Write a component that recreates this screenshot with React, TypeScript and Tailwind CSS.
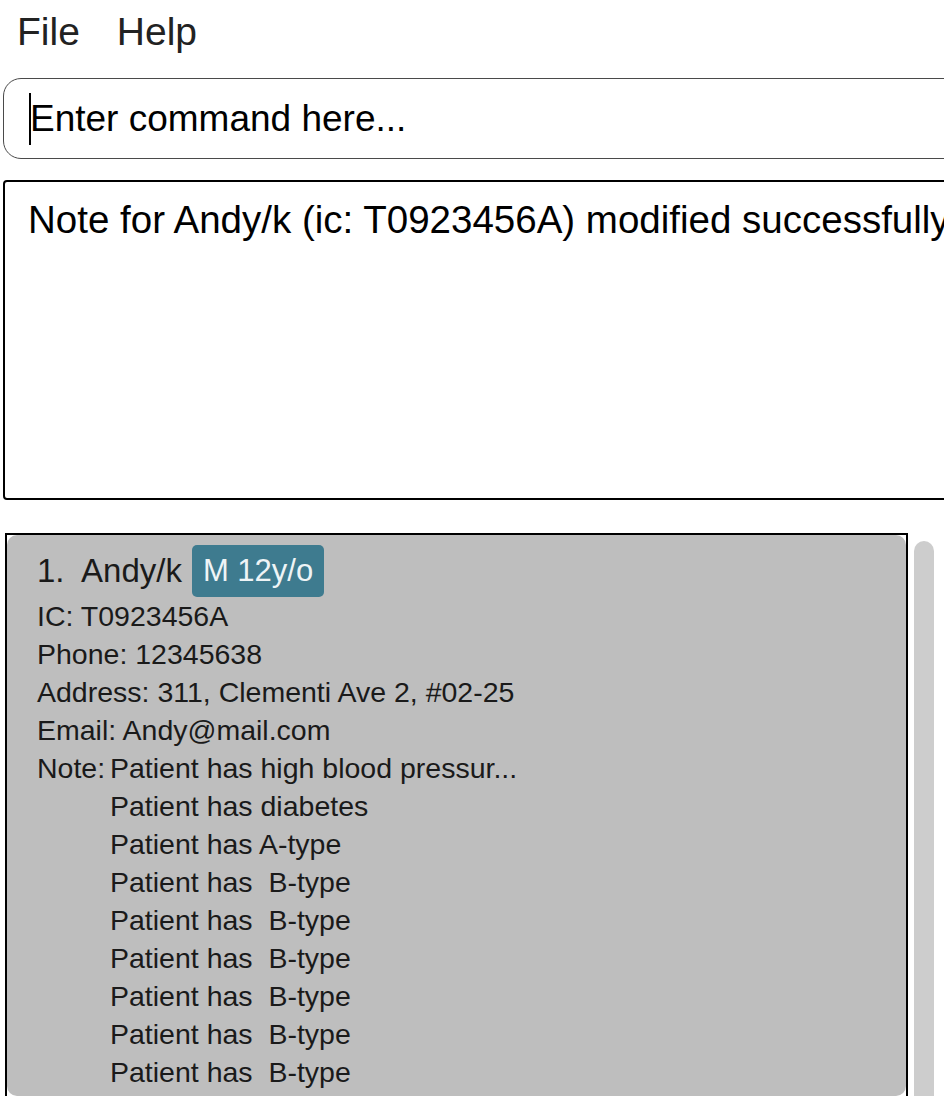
const noteLines = [
  "Patient has high blood pressur...",
  "Patient has diabetes",
  "Patient has A-type",
  "Patient has  B-type",
  "Patient has  B-type",
  "Patient has  B-type",
  "Patient has  B-type",
  "Patient has  B-type",
  "Patient has  B-type",
];

const App = () => {
  return (
    <div className="relative h-[1096px] w-[944px] overflow-hidden bg-white font-['Liberation_Sans',Arial,sans-serif]">
      {/* menu bar */}
      <div className="flex h-[66px] items-center gap-[37px] pb-[2px] pl-[17px] text-[39px] text-[#222]">
        <span>File</span>
        <span>Help</span>
      </div>

      {/* command box */}
      <div className="ml-[3px] mt-[12px] flex h-[81px] w-[1000px] items-center rounded-[18px] border-[1.5px] border-[#4a4a4a] pl-[25px]">
        <span className="h-[52px] w-[2px] bg-black" />
        <span className="-ml-[1px] text-[37px] text-black">Enter command here...</span>
      </div>

      {/* result display */}
      <div className="ml-[3px] mt-[21px] h-[320px] w-[1000px] rounded-[4px] border-2 border-black pl-[23px] pt-[9px]">
        <p className="whitespace-nowrap text-[38.5px] text-black">
          Note for Andy/k (ic: T0923456A) modified successfully
        </p>
      </div>

      {/* list */}
      <div className="mt-[33px] flex items-start">
        <div className="ml-[5px] h-[600px] w-[903px] border-2 border-black">
          <div className="h-[561px] rounded-[10px] bg-[#bebebe] pl-[30px] pt-[10px] text-[#1a1a1a]">
            <div className="flex h-[52px] items-center gap-[10px]">
              <span className="whitespace-pre text-[33px]">1.  Andy/k</span>
              <span className="flex h-[52px] items-center rounded-[5px] bg-[#3e7b8f] px-[11px] text-[31px] text-[#eef4f6]">
                M 12y/o
              </span>
            </div>
            <div className="text-[28.5px] leading-[38px]">
              <div>IC: T0923456A</div>
              <div>Phone: 12345638</div>
              <div>Address: 311, Clementi Ave 2, #02-25</div>
              <div>Email: Andy@mail.com</div>
              <div className="flex">
                <span className="w-[73px]">Note:</span>
                <div className="flex flex-col">
                  {noteLines.map((line, i) => (
                    <span key={i} className="whitespace-pre">
                      {line}
                    </span>
                  ))}
                </div>
              </div>
            </div>
          </div>
        </div>
        <div className="ml-[6px] mt-[8px] h-[600px] w-[20px] rounded-[10px] bg-[#cdcdcd]" />
      </div>
    </div>
  );
};

export default App;
